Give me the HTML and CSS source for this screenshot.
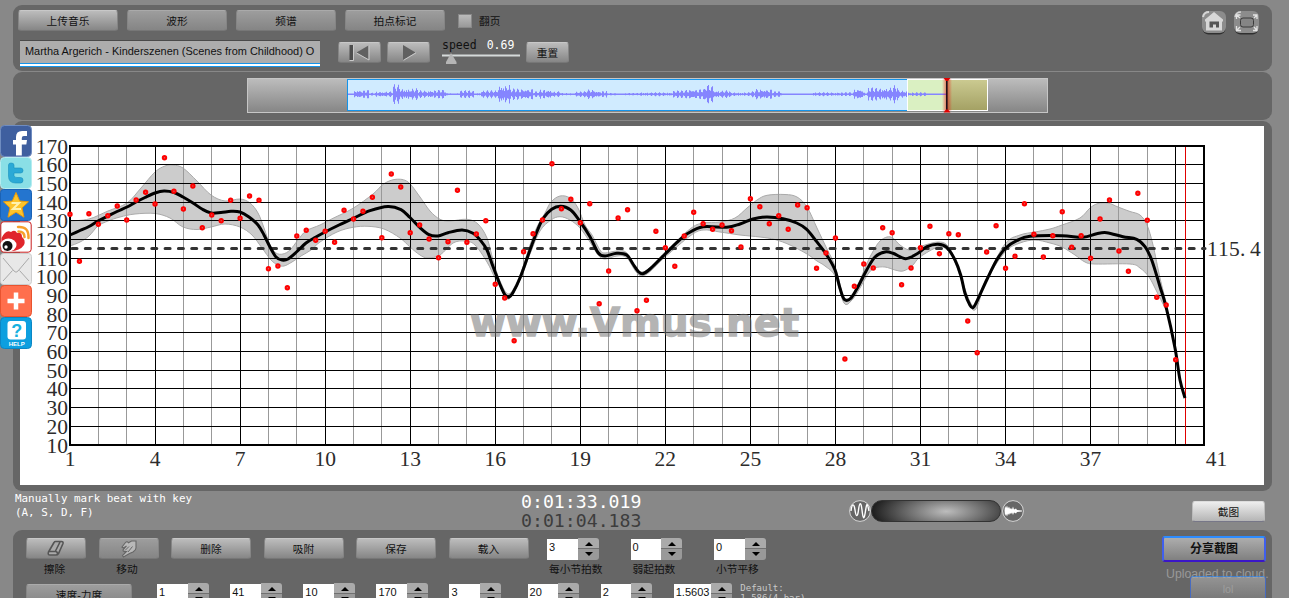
FILE: index.html
```html
<!DOCTYPE html>
<html lang="zh-CN">
  <head>
    <meta charset="UTF-8" />
    <meta name="viewport" content="width=device-width, initial-scale=1.0">
    <title>Vmus.net</title>
    <link rel="stylesheet" href="styles.css">
  </head>
  <body>
    <!-- Share bar -->
    <div class="share-bar">
      <svg viewBox="0 0 32 32"><rect class="fb" x=".5" y=".5" width="31" height="31" rx="4"/><path d="M16 30.500V19.500H13V15H16V12Q16 6 22 6H27V11H23.800Q21.800 11 21.800 13V15H27L26.300 19.500H21.800V30.500Z" fill="#fff"/></svg>
      <svg viewBox="0 0 32 32"><rect class="tw" x=".5" y=".5" width="31" height="31" rx="4"/><path d="M8.500 8Q8.500 6 11 6Q14 6 14 8V11H20.500Q23 11 23 13.500Q23 16 20.500 16H14V18.500Q14 20.500 17 20.500H20.500Q23 20.500 23 23.200Q23 26 20.500 26H15.500Q8.500 26 8.500 19Z" fill="#2ba9d6" stroke="#1791bd" stroke-width=".6"/></svg>
      <svg viewBox="0 0 32 32"><rect class="qz" x=".5" y=".5" width="31" height="31" rx="3"/><path d="M16 3.500L19.700 12L28.500 12.800L22 18.800L24 28.200L16 23.200L8 28.200L10 18.800L3.500 12.800L12.300 12Z" fill="#fdc52c" stroke="#e99a0c"/><path d="M11.500 14H19L13 20H21" fill="none" stroke="#fff3b0" stroke-width="2"/></svg>
      <svg viewBox="0 0 32 32"><rect class="wb" x=".8" y=".8" width="30.400" height="30.400" rx="3"/><path d="M1.500 17Q6 8 11 11Q15 8 17 12Q22 11 22 16Q26 19 24 24Q20 30 10 30H5Q1 28 1.500 17Z" fill="#e0252b"/><ellipse cx="8.500" cy="24" rx="8" ry="6.500" fill="#fff"/><circle cx="7.500" cy="25" r="5" fill="#111"/><circle cx="6" cy="26" r="1.700" fill="#fff"/><path d="M18 6Q29 5 28.500 17M18.500 10.500Q24.500 10.500 24.500 16" fill="none" stroke="#f7a02c" stroke-width="2.500" stroke-linecap="round"/></svg>
      <svg viewBox="0 0 32 32"><rect class="ml" x=".5" y=".5" width="31" height="31" rx="3"/><path d="M3 5L14 18Q16 20.500 18 18L29 5M3 28L12.500 17.500M29 28L19.500 17.500" fill="none" stroke="#a9a9a9"/></svg>
      <svg viewBox="0 0 32 32"><rect class="pl" x=".5" y=".5" width="31" height="31" rx="4"/><path d="M16 7.500V24.500M7.500 16H24.500" stroke="#fff" stroke-width="4.500"/></svg>
      <svg viewBox="0 0 32 32"><rect class="hp" x=".5" y=".5" width="31" height="31" rx="4"/><rect x="7.500" y="4" width="18.500" height="18.500" rx="3" fill="#fff"/><text x="16.700" y="19.500" class="help-mark">?</text><text x="16.700" y="29" class="help-text">HELP</text></svg>
    </div>

    <div class="app">
      <!-- Toolbar -->
      <header class="panel toolbar">
        <div class="tool-left">
          <div class="tabs">
            <button class="btn tab bright">上传音乐</button>
            <button class="btn tab">波形</button>
            <button class="btn tab">频谱</button>
            <button class="btn tab">拍点标记</button>
            <span class="check"></span>
            <span class="check-label">翻页</span>
          </div>
          <div class="player">
            <div class="track-name">Martha Argerich - Kinderszenen (Scenes from Childhood) O</div>
            <button class="btn small"><svg width="24" height="17" viewBox="0 0 24 17"><path d="M1.500 1H5V16H1.500Z" fill="#4d4d4d"/><path d="M20.500 1.500V15.500L8.500 8.500Z" fill="#606060"/><path d="M5.500 1V16.500H1.500M8.500 9L21 16V1.500" fill="none" stroke="#c9c9c9"/></svg></button>
            <button class="btn small"><svg width="16" height="17" viewBox="0 0 16 17"><path d="M2 1V16L14.500 8.500Z" fill="#606060"/><path d="M2.500 16.300L15 8.800" stroke="#c9c9c9"/></svg></button>
            <div class="speed">
              <div class="speed-text"><span>speed</span><b>0.69</b></div>
              <svg width="80" height="14" viewBox="0 0 80 14"><path d="M0 2.500H78" stroke="#d5dada" stroke-width="2"/><path d="M9 0L14.500 9V11H4V9Z" fill="#b5b5b5"/></svg>
            </div>
            <button class="btn small reset">重置</button>
          </div>
        </div>
        <div class="tool-icons">
          <svg width="26" height="26" viewBox="0 0 26 26"><rect x="1.500" y="2" width="23" height="22.500" rx="6" fill="#303030"/><rect x="1" y="1" width="24" height="22" rx="6" fill="#8c8c8c"/><path d="M2 7Q3 2 8 2" stroke="#d5d5d5" stroke-width="2" fill="none"/><path d="M13 2L22 9.500V11.500H21V20.500H5V11.500H4V9.500Z" fill="#d7d7d7"/><path d="M8.500 17.500V11.500H18V17.500H15V14.500H12V17.500Z" fill="#555"/></svg>
          <svg width="27" height="26" viewBox="0 0 27 26"><rect x="1.500" y="2" width="24" height="22.500" rx="6" fill="#303030"/><rect x="1" y="1" width="25" height="22" rx="6" fill="#8c8c8c"/><path d="M2 7Q3 2 8 2" stroke="#d5d5d5" stroke-width="1.500" fill="none"/><rect x="7.500" y="8" width="13" height="9" rx="2.500" fill="#858585" stroke="#3b3b3b"/><path d="M3.500 9V5H7.500M3.500 5L7 8M20 5H24V9M24 5L21 8M3.500 16V20.500H8M3.500 20.500L7 17M20 20.500H24V16M24 20.500L21 17" fill="none" stroke="#e3e3e3" stroke-width="1.300"/></svg>
        </div>
      </header>

      <!-- Overview waveform -->
      <section class="panel overview">
        <svg id="wave" width="801" height="36" viewBox="247 77 801 36">
          <defs>
            <linearGradient id="stripGradient" x2="0" y2="1"><stop offset="0" stop-color="#bdbdbd"/><stop offset="1" stop-color="#858585"/></linearGradient>
            <linearGradient id="oliveGradient" x2="0" y2="1"><stop offset="0" stop-color="#cccb92"/><stop offset="1" stop-color="#a3a063"/></linearGradient>
            <linearGradient id="headGlow"><stop offset="0" stop-color="#f00" stop-opacity="0"/><stop offset=".5" stop-color="#d00" stop-opacity=".55"/><stop offset="1" stop-color="#f00" stop-opacity="0"/></linearGradient>
          </defs>
          <rect x="247.500" y="78.500" width="800" height="34" fill="url(#stripGradient)" stroke="#c6c6c6"/>
          <rect x="347.500" y="79.500" width="599" height="31" fill="#d0ebff" stroke="#1594ea"/>
          <rect x="907" y="79" width="40" height="32" fill="#daf0c2"/>
          <rect x="947" y="79" width="41" height="32" fill="url(#oliveGradient)"/>
          <path id="wavePath" fill="#8585ff"/>
          <rect x="907.500" y="79.500" width="80" height="31" fill="none" stroke="#fff"/>
          <rect x="942" y="79" width="10" height="32" fill="url(#headGlow)"/>
          <path d="M946.800 79V111" stroke="#201018" stroke-width="1.600"/>
          <path d="M943.500 78H950.500L948 81H946ZM943.500 112.500H950.500L948 109.500H946Z" fill="#e00000"/>
        </svg>
      </section>

      <!-- Tempo chart -->
      <section class="panel chart-panel">
        <svg id="chart" class="chart" width="1244" height="359" viewBox="20 126 1244 359">
          <text class="watermark" x="470" y="336" textLength="329" lengthAdjust="spacingAndGlyphs">www.Vmus.net</text>
        </svg>
      </section>

      <div class="status">
        <p class="hint">Manually mark beat with key<br>(A, S, D, F)</p>
        <div class="times"><div>0:01:33.019</div><div class="time-sub">0:01:04.183</div></div>
        <div class="zoomer">
          <svg width="22" height="24" viewBox="0 0 22 24"><circle cx="11" cy="12" r="10.400" fill="#666" stroke="#d5d5d5"/><path d="M2 12C3 4 5 4 6 11S8.500 19 9.500 11S12 2 13 11S15 22 16.500 12S18.500 5 20 12" fill="none" stroke="#fff" stroke-width="1.400"/></svg>
          <span class="wheel"></span>
          <svg width="22" height="24" viewBox="0 0 22 24"><circle cx="11" cy="12" r="10.400" fill="#666" stroke="#d5d5d5"/><path d="M2.500 11.500L3 7L4 9L5 6.500L6 9.500L7 7.500L8 10L9 9L10 10.500L11 7.500L12 10.500L14 9.500L15 11L20 11.500V12.500L15 13L14 14.500L12 13.500L11 16L10 13.500L9 15L8 14L7 16L6 14.500L5 17.500L4 15L3 17Z" fill="#fff"/></svg>
        </div>
        <button class="btn shot">截图</button>
      </div>

      <!-- Bottom controls -->
      <section class="panel controls">
        <div class="controls-main">
          <div class="row row-actions">
            <div class="field center"><button class="btn icon-btn bright"><svg width="18" height="17" viewBox="0 0 18 17"><path d="M1.500 12L7 2.500Q7.500 1.500 8.500 1.500H14.500Q16.500 1.500 16 3.500L11.500 13.500Q10.500 15 9 15H3Q.5 15 1.500 12ZM2 11.500H8.500Q10.500 11.500 10.500 14M8.500 11L13 2" fill="#aaa" stroke="#555" stroke-width="1.600"/></svg></button><label>擦除</label></div>
            <div class="field center"><button class="btn icon-btn"><svg width="18" height="18" viewBox="0 0 18 18"><path d="M2 7L5.500 2.500Q7 .8 8.500 2.800L11.500 1H16V8Q16 10 13 12L9.500 13.500L3.500 17L2.500 15.500L6.500 11.500Q3 12 3 10L6.500 6L3.500 8Z" fill="#b9b9b9" stroke="#666" stroke-width="1.100"/><path d="M5 10.500L9 6.500M8 12L12.500 6.500" stroke="#666"/></svg></button><label>移动</label></div>
            <button class="btn action">删除</button>
            <button class="btn action">吸附</button>
            <button class="btn action">保存</button>
            <button class="btn action">载入</button>
            <div class="field beats"><div class="stepper"><span>3</span><i></i></div><label>每小节拍数</label></div>
            <div class="field"><div class="stepper"><span>0</span><i></i></div><label>弱起拍数</label></div>
            <div class="field"><div class="stepper"><span>0</span><i></i></div><label>小节平移</label></div>
          </div>
          <div class="row row-params">
            <button class="btn mode">速度-力度</button>
            <div class="stepper"><span>1</span><i></i></div>
            <div class="stepper"><span>41</span><i></i></div>
            <div class="stepper"><span>10</span><i></i></div>
            <div class="stepper"><span>170</span><i></i></div>
            <div class="stepper"><span>3</span><i></i></div>
            <div class="stepper apart"><span>20</span><i></i></div>
            <div class="stepper"><span>2</span><i></i></div>
            <div class="stepper wide"><span>1.5603</span><i></i></div>
            <p class="default">Default:<br>1.586(4 bar)</p>
          </div>
        </div>
        <div class="share">
          <button class="btn share-btn">分享截图</button>
          <span class="uploaded">Uploaded to cloud.</span>
          <button class="btn lol-btn">lol</button>
        </div>
      </section>
    </div>
    <script src="script.js"></script>
  </body>
</html>
```
FILE: styles.css
```css
* {
  box-sizing: border-box;
}

body {
  margin: 0;
  height: 598px;
  overflow: hidden;
  background-color: #888;
  font-family: "Liberation Sans", "Noto Sans CJK SC", sans-serif;
  font-size: 11px;
  color: #111;
}

svg {
  display: block;
  flex: none;
}

p {
  margin: 0;
}

.app {
  padding: 5px 17px 0 13px;
}

.panel {
  background: #666;
  border-radius: 9px;
  margin-bottom: 1px;
}

.btn {
  display: flex;
  align-items: center;
  justify-content: center;
  flex: none;
  height: 21px;
  padding: 0;
  border: 1px solid #858585;
  border-top-color: #aaa;
  border-bottom-color: #777;
  border-radius: 3px;
  background: linear-gradient(#9d9d9d, #858585);
  color: #111;
  font-family: inherit;
  font-size: 10.7px;
  line-height: 18px;
}

.bright,
.small,
.action {
  background: linear-gradient(#bcbcbc, #868686);
  border-top-color: #c8c8c8;
}

/* toolbar */
.toolbar {
  display: flex;
  justify-content: space-between;
  height: 66px;
  padding: 5px 12px 0 5px;
}

.tabs {
  display: flex;
  gap: 9px;
}

.tab {
  width: 100px;
}

.check {
  width: 14px;
  height: 14px;
  margin: 4px -2px 0 4px;
  background: linear-gradient(#bbb, #999);
  border: 1px solid #888;
}

.check-label {
  line-height: 22px;
  font-size: 10.7px;
}

.player {
  display: flex;
  align-items: flex-start;
  padding: 7px 0 0 2px;
}

.track-name {
  width: 300px;
  height: 29px;
  margin: 1px 18px 0 0;
  padding-left: 5px;
  border-top: 1px solid #4a4a4a;
  background: linear-gradient(#adadad 0 22px, #1594ea 22px 23px, #fff 23px 25px, #1594ea 25px 26px, transparent 26px);
  font-size: 10.95px;
  line-height: 21px;
  white-space: nowrap;
  overflow: hidden;
}

.small {
  width: 43px;
  margin: 3px 6px 0 0;
}

.speed {
  width: 80px;
  margin: -1px 4px 0 6px;
}

.speed-text {
  display: flex;
  gap: 10px;
  height: 15px;
  font: 11.500px/14px "DejaVu Sans Mono", monospace;
}

.speed-text b {
  font-weight: normal;
  color: #fff;
}

.tool-icons {
  display: flex;
  gap: 6px;
}

/* overview */
.overview {
  display: flex;
  height: 48px;
  padding: 5px 0 0 234px;
}

/* chart */
.chart-panel {
  height: 370px;
  padding: 5px 8px 6px 7px;
  margin: 0;
}

.chart {
  background: #fff;
}

.axis-text {
  font-family: "Liberation Serif", serif;
  font-size: 21.500px;
  fill: #2c2c2c;
}

.watermark {
  font-family: "DejaVu Sans", sans-serif;
  font-weight: bold;
  font-size: 39.500px;
  fill: #777;
  stroke: #777;
  stroke-width: 1.500;
  opacity: .55;
}

.grid-major {
  stroke: #000;
}

.grid-minor {
  stroke: #999;
}

.frame {
  fill: none;
  stroke: #000;
  stroke-width: 2;
}

.band {
  fill: #000;
  fill-opacity: .2;
  stroke: #aaa;
}

.mean-line {
  stroke: #333;
  stroke-width: 3;
  stroke-linecap: round;
  stroke-dasharray: 5 8.300;
}

.tempo {
  fill: none;
  stroke: #000;
  stroke-width: 3;
  stroke-linejoin: round;
}

.beat {
  fill: #c66;
  stroke: #f00;
  stroke-width: 2;
}

/* status line */
.status {
  display: flex;
  height: 39px;
}

.hint {
  width: 507px;
  padding: 1px 0 0 2px;
  color: #fff;
  font: 10.900px/14px "DejaVu Sans Mono", monospace;
}

.times {
  width: 329px;
  padding: 1px 0 0 1px;
  color: #fff;
  font: 18.200px/19px "DejaVu Sans Mono", monospace;
}

.time-sub {
  color: #3d3d3d;
}

.zoomer {
  display: flex;
  align-items: flex-start;
  padding-top: 8px;
  width: 343px;
}

.wheel {
  width: 130px;
  height: 22px;
  margin: 1px 1px 0 0;
  border-radius: 11px;
  border: 1px solid #333;
  background: radial-gradient(ellipse 74px 26px at 58% 52%, #bdbdbd, #6f6f6f 50%, #1f1f1f);
}

.shot {
  width: 73px;
  margin-top: 10px;
  background: linear-gradient(#eee, #b5b5b5);
  border-color: #ddd #bbb #778;
}

/* bottom controls */
.controls {
  display: flex;
  justify-content: space-between;
  height: 90px;
  padding: 8px 4px 0 13px;
}

.row {
  display: flex;
  align-items: flex-start;
}

.row-actions {
  gap: 12.500px;
  height: 45px;
}

.field label {
  display: block;
  padding-left: 2px;
  line-height: 18px;
  font-size: 10.700px;
  white-space: nowrap;
}

.field {
  width: 71px;
}

.field.center {
  width: 60px;
}

.center label {
  text-align: center;
  padding: 1px 3px 0 0;
}

.beats {
  margin-left: 6px;
}

.icon-btn {
  width: 60px;
}

.action {
  width: 80px;
}

.stepper {
  display: flex;
  flex: none;
  width: 51.500px;
  height: 22px;
}

.stepper span {
  flex: 1;
  height: 21px;
  margin-top: 1px;
  padding-left: 2px;
  background: #fff;
  line-height: 17px;
  font-size: 11px;
}

.stepper i {
  position: relative;
  width: 21px;
  border-radius: 0 3px 3px 0;
  background: linear-gradient(#aaa 0 10px, #707070 10px 11px, #999 11px);
}

.stepper i::before,
.stepper i::after {
  content: "";
  position: absolute;
  left: 7px;
  border: 4px solid transparent;
}

.stepper i::before {
  top: 0;
  border-bottom-color: #000;
}

.stepper i::after {
  top: 14px;
  border-top-color: #000;
}

.row-params {
  gap: 21.600px;
}

.mode {
  width: 106px;
  margin: 1px 3.500px 0 0;
}

.apart {
  margin-left: 5px;
}

.wide {
  width: 58px;
}

.default {
  margin: 0 0 0 -13px;
  color: #c9c9c9;
  font: 9px/10px "DejaVu Sans Mono", monospace;
}

.share {
  display: flex;
  flex-direction: column;
  align-items: flex-end;
  width: 106px;
  margin-top: -2px;
}

.share-btn {
  width: 104px;
  height: 26px;
  margin-right: 2px;
  border: 2px solid;
  border-color: #2d8cff #3f5fee #3a16c8;
  font-size: 12px;
  font-weight: bold;
}

.share-btn,
.lol-btn {
  background: linear-gradient(#adadad, #808080);
}

.uploaded {
  width: 102px;
  height: 14px;
  padding-top: 4px;
  font-size: 12.300px;
  line-height: 17px;
  white-space: nowrap;
  color: #999;
}

.lol-btn {
  width: 76px;
  height: 26px;
  margin-right: 2px;
  border: 1px solid #376ef0;
  border-top-color: #2d8cff;
  opacity: .65;
  color: #bbb;
}

/* share icons lie over the chart panel */
.share-bar {
  position: absolute;
  left: 0;
  top: 125px;
  width: 32px;
}

.share-bar svg {
  width: 32px;
  height: 32px;
}

.fb {
  fill: #3f5f9f;
  stroke: #6f8cc0;
}

.tw {
  fill: #8adfe6;
  stroke: #b5ecf0;
}

.qz {
  fill: #2475cf;
  stroke: #1a62b5;
}

.wb {
  fill: #fff;
  stroke: #c81e1e;
}

.ml {
  fill: #e8e8e8;
  stroke: #ccc;
}

.pl {
  fill: #ff6f4d;
  stroke: #e8532f;
}

.hp {
  fill: #0d9fdf;
  stroke: #0b86c4;
}

.help-mark,
.help-text {
  font-family: "Liberation Sans", sans-serif;
  font-weight: bold;
  text-anchor: middle;
}

.help-mark {
  font-size: 18px;
  fill: #17b1e0;
}

.help-text {
  font-size: 6px;
  fill: #fff;
}
```
FILE: script.js
```js
const NS = 'http://www.w3.org/2000/svg';
const chart = document.getElementById('chart');
const watermark = chart.querySelector('.watermark');

const LEFT = 70, RIGHT = 1204, TOP = 146, BOTTOM = 445;
const MEASURE = (RIGHT - LEFT) / 40;

// y of each beat, three beats per measure
const beats = [
  214.3, 261.3, 213.7, 224.3, 215.7, 206, 220, 200, 192.3, 204, 157.7, 191.3, 209, 186, 227.7,
  215, 220.7, 200.3, 218.3, 196, 200.3, 268.7, 266, 287.7, 236, 230.3, 240.3, 231.3, 242.3, 210.3,
  219, 211.3, 197.3, 237.7, 174, 187, 232.7, 225, 239, 257.7, 241.7, 190.3, 242.3, 234, 220.7,
  284.3, 298, 340.7, 251.7, 233.7, 220, 163.7, 208.7, 199.3, 222.7, 203.7, 303.7, 271, 218, 209.7,
  310.7, 300.3, 231.3, 247.7, 266.3, 236, 212.3, 223.7, 229.3, 225, 230.7, 247, 198.7, 206.7, 223.7,
  215.7, 229.3, 205, 207.7, 268.3, 253, 238, 359, 286.3, 264, 268, 227.7, 232.7, 284.7, 268,
  247.7, 226.3, 253.7, 233.7, 234.7, 321, 352.7, 252, 225.7, 268.3, 256.3, 203.7, 234.3, 257, 235.7,
  211.7, 247.3, 235.7, 258.3, 219, 200, 251, 271.3, 193.3, 220.3, 297.3, 305, 359.7
];

const tempo = [
  [70,235],[80,230.5],[89,226.5],[98,221],[108,216],[117,211.5],[127,207],[136,202],[145,197.5],[155,193],[164,191],
  [174,192.5],[183,197],[193,203],[202,209],[211,213],[221,212.5],[231,211.3],[240,212],[249,217],[258,225],[264,235],
  [270,247],[276,257],[282,260],[288,259],[297,251.5],[306,243],[316,237],[325,232],[339,225],[353,218.5],[370,210.7],
  [388,206.5],[401,209.7],[410,217.5],[420,227.7],[429,234.7],[438,236],[448,232.7],[462,230],[473,233.3],[481,241],
  [487,250],[493,266.5],[500,284.5],[505,295],[509,297],[513,292.5],[520,278],[530,250],[537,231.5],[543,218.7],
  [551.7,209.3],[560.7,206.3],[570.7,210],[579,220],[590,236.7],[598,252.5],[605,256],[616.7,253.3],[626.7,255],
  [633,264],[638.5,271.7],[642.7,273.7],[650,269],[665,254.3],[676.7,242.7],[688,233.3],[703,226.7],[726.7,227.3],
  [740,224],[753,219],[766.7,217],[783,218.7],[796.7,223],[806.7,229.3],[816.7,241.7],[826.7,255],[835,270],
  [840,288.3],[844.3,299.3],[850.7,298.3],[858,286.7],[866.7,270],[875,257],[885,252],[893,253.3],[905.7,258.7],
  [916.7,254],[927,246.7],[938,244.3],[946.7,247.3],[955,260],[960.7,275],[965,293.3],[970,305.3],[973,307.7],
  [976.7,301.7],[986.7,280],[996.7,260],[1005.7,248],[1016.7,240.7],[1030,236.3],[1062,235.7],[1083,237.3],
  [1096.7,233.7],[1106.7,232.7],[1123,236.7],[1136.7,239.3],[1145,246.7],[1151.7,260],[1160,286.7],[1166,306.7],
  [1175,348],[1180,380],[1185,398]
];

const upper = [
  [70,221],[89,219],[108,211],[127,203],[141,188],[155,172],[165,166],[173,165],[183,168],[197,181],[211,195],
  [225,201],[240,199],[250,203],[258,213],[264,228],[270,245],[276,253],[283,254],[290,250],[298,240],[306,231],
  [320,225],[333,218.3],[353,208.3],[373,194],[384,183.7],[396,179.3],[408,182],[420,197],[430,211],[440,219.3],
  [450,221],[467,219.3],[478,224],[487,238],[493,260],[500,281],[509,294],[520,275],[530,245],[537,227],[545,213],
  [551,202],[560,196],[570,198],[578,208],[585,225],[592,235],[600,250],[605,253],[617,251],[627,253],[642,272],
  [665,252],[690,229],[703,223],[720,222],[735,218],[747,208],[757,200],[767,195.3],[785,194.5],[797,197],[807,207],
  [817,228],[827,249],[835,266],[844,297],[852,296],[860,280],[868,261],[875,248],[880,241],[887,237],[893,238],
  [900,245],[909,250],[917,248],[925,245],[938,242],[947,245],[955,259],[973,306],[986,279],[1005,244],[1020,235],
  [1035,232],[1050,229],[1062,225],[1080,218],[1090,208],[1098,203.5],[1108,203],[1118,207],[1130,211.5],[1140,215],
  [1147,225],[1153,245],[1160,278],[1166,302]
];

const lower = [
  [70,246],[80,242],[89,236],[98,226],[108,221],[120,217],[135,214],[155,213.5],[170,218],[183,227],[197,229.5],
  [211,227],[225,224],[240,227],[252,235],[262,248],[271,260],[278,265],[284,266],[292,262],[301,256],[311,250],
  [320,242],[337,232],[353,227.3],[368,226.3],[384,229],[400,238],[410,247],[420,255],[428,258],[440,255],[453,243],
  [465,241],[475,245],[487,262],[495,278],[501,288],[509,299],[520,280],[530,254],[540,231],[551,220],[560,216.7],
  [570,220],[580,228],[590,242],[598,255],[605,259],[617,256],[627,258],[642,276],[665,257],[690,236],[703,230],
  [720,232],[740,235],[760,237],[775,239.5],[790,245],[807,254],[817,261],[825,266],[835,276],[844,303],[852,300],
  [860,288],[868,274],[875,268],[885,267],[895,270],[903,271],[912,266],[920,257],[938,247],[947,250],[955,262],
  [973,310],[986,281],[1005,252],[1020,243],[1035,240],[1050,243],[1062,247],[1075,255],[1085,262],[1095,264],
  [1130,264],[1140,268],[1149,277],[1157,292],[1166,310]
];

function add(name, attrs, text) {
  const el = document.createElementNS(NS, name);
  for (const key in attrs) el.setAttribute(key, attrs[key]);
  if (text !== undefined) el.textContent = text;
  chart.appendChild(el);
  return el;
}

// smooth curve through the points
function curve(points) {
  let d = '';
  for (let i = 0; i < points.length - 1; i++) {
    const a = points[i - 1] || points[i], b = points[i];
    const c = points[i + 1], e = points[i + 2] || c;
    d += `C${b[0] + (c[0] - a[0]) / 6} ${b[1] + (c[1] - a[1]) / 6} ${c[0] - (e[0] - b[0]) / 6} ${c[1] - (e[1] - b[1]) / 6} ${c[0]} ${c[1]}`;
  }
  return d;
}

// confidence band
const back = lower.slice().reverse();
add('path', { class: 'band', d: `M${upper[0]}${curve(upper)}L${back[0]}${curve(back)}Z` });

// grid
for (let m = 1; m < 40; m++) {
  const x = Math.floor(LEFT + m * MEASURE) + 0.5;
  add('path', { class: m % 3 ? 'grid-minor' : 'grid-major', d: `M${x} ${TOP}V${BOTTOM}` });
}
for (let v = 10; v <= 170; v += 10) {
  const y = BOTTOM - (v - 10) / 160 * (BOTTOM - TOP);
  if (v > 10 && v < 170) add('path', { class: 'grid-major', d: `M${LEFT} ${Math.floor(y) + 0.5}H${RIGHT}` });
  add('text', { class: 'axis-text', x: 68, y: y + 7.5, 'text-anchor': 'end' }, v);
}
for (let m = 1; m <= 37; m += 3) {
  add('text', { class: 'axis-text', x: LEFT + (m - 1) * MEASURE, y: 465.7, 'text-anchor': 'middle' }, m);
}
add('text', { class: 'axis-text', x: 1216.5, y: 465.7, 'text-anchor': 'middle' }, 41);
add('rect', { class: 'frame', x: LEFT, y: TOP, width: RIGHT - LEFT, height: BOTTOM - TOP });
add('path', { d: 'M1185.5 147V444', stroke: '#e00000' });

add('path', { class: 'mean-line', d: `M72 248.5H${RIGHT + 1}` });
add('text', { class: 'axis-text', x: '1207 1218 1229 1240 1250', y: 256 }, '115.4');
add('path', { class: 'tempo', d: `M${tempo[0]}${curve(tempo)}` });

chart.appendChild(watermark);
beats.forEach((y, i) => add('circle', { class: 'beat', cx: LEFT + i * MEASURE / 3, cy: y, r: 1.7 }));

// overview waveform: [from, to, amplitude]
const levels = [
  [348,354,.7],[354,369,4.5],[369,376,1.5],[376,393,3],[393,396,10],[396,400,8],[400,418,6],[418,430,4],[430,446,5],
  [446,460,1.2],[460,474,4],[474,481,1.5],[481,498,4.5],[498,510,10],[510,535,6],[535,543,3],[543,552,6],[552,561,4],
  [561,578,1.2],[578,586,3],[586,596,5],[596,607,4],[607,640,1.2],[640,673,2],[673,686,4],[686,705,5.5],[705,714,10],
  [714,730,4],[730,750,2],[750,755,3],[755,772,5.5],[772,782,3],[782,812,.8],[812,826,2],[826,854,2],[854,863,6],
  [863,868,2],[868,893,7],[893,898,9],[898,907,4],[907,926,2],[926,946,.7]
];
const shapes = [
  [348,354,.7],[354,369,4.5],[369,376,1.5],[376,393,3],[393,400,10],[400,418,6],[418,430,4],[430,446,4.5],
  [446,460,1.2],[460,474,4],[474,481,1.5],[481,498,4],[498,510,10],[510,533,6],[533,540,3],[540,552,5],[552,561,3],
  [561,575,1.2],[575,586,3],[586,596,5],[596,607,3.5],[607,640,1.2]
];
const bars = shapes.concat(levels.filter(level => level[0] >= 640));
let wave = '';
for (const [from, to, amp] of bars) {
  for (let x = from; x < to; x++) {
    const h = Math.max(0.8, amp * (0.3 + 0.7 * Math.abs(Math.sin(x * 2.3) * Math.cos(x * 0.71))));
    wave += `M${x} ${94.2 - h}h1v${2 * h}h-1Z`;
  }
}
document.getElementById('wavePath').setAttribute('d', wave);
```
